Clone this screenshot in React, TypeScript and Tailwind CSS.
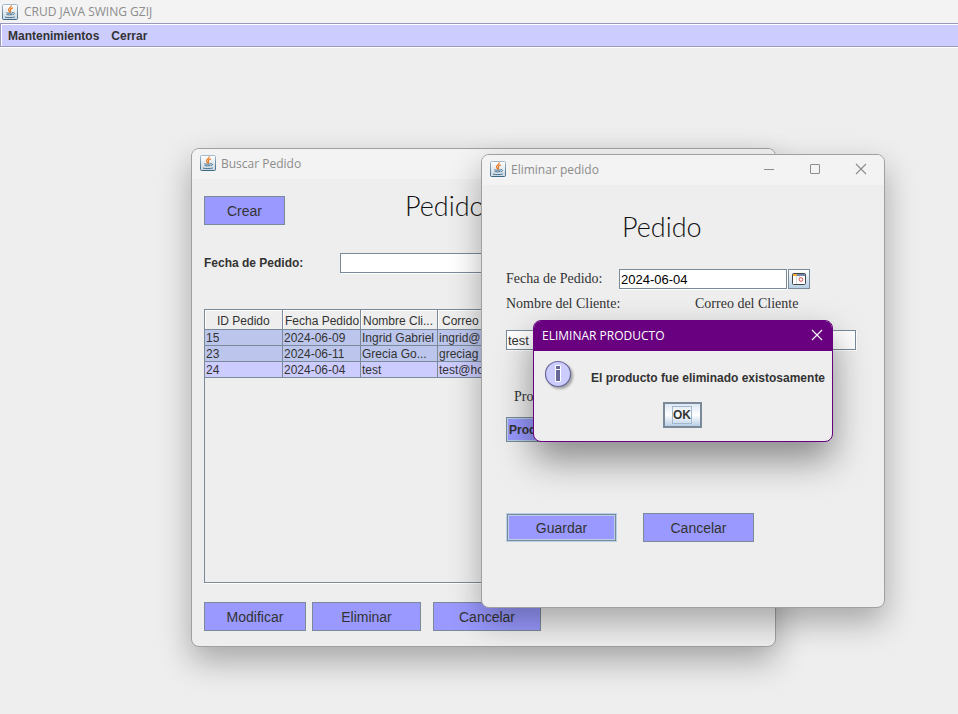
import type { ReactNode } from "react";

function JavaIcon() {
  return (
    <svg width="16" height="16" viewBox="0 0 16 16" fill="none" className="shrink-0" aria-hidden="true">
      <defs>
        <linearGradient id="cup-bg" x1="0" y1="0" x2="0" y2="1">
          <stop offset="0" stopColor="#ffffff" />
          <stop offset="1" stopColor="#c9d6e0" />
        </linearGradient>
        <linearGradient id="cup-edge" x1="0" y1="0" x2="0" y2="1">
          <stop offset="0" stopColor="#a3b9cb" />
          <stop offset="1" stopColor="#3f6885" />
        </linearGradient>
      </defs>
      <rect x="0.5" y="0.5" width="15" height="15" rx="1" fill="url(#cup-bg)" stroke="url(#cup-edge)" />
      <path d="M9.200 1.800C9.800 3.400 6.200 4.200 6.500 5.900c.2.800 1 1.200 1 2.100M10.600 4C9 4.600 8 5.400 8.400 6.300c.3.600.5 1-.1 1.800" stroke="#e8761c" strokeWidth="1.200" strokeLinecap="round" />
      <path d="M4.600 8.900c1 .5 4.600.5 5.800 0M5 10.600c1.200.4 3.800.4 5 0M11 8.700c2-.4 2.200 1.400.2 2M3.400 13.200c1.800.6 7.200.6 9-.1" stroke="#4a7391" strokeLinecap="round" />
    </svg>
  );
}

function CloseIcon() {
  return (
    <svg width="12" height="12" viewBox="0 0 12 12" stroke="currentColor" strokeWidth="1.100" fill="none" aria-hidden="true">
      <path d="M1 1l10 10M11 1L1 11" />
    </svg>
  );
}

function TitleBar({ title, children }: { title: string; children?: ReactNode }) {
  return (
    <header className="flex h-[30px] shrink-0 items-center gap-[5px] bg-[#f3f3f3] pb-0.5 pl-2 font-['Open_Sans','Noto_Sans',sans-serif] text-xs text-[#8c8c8c]">
      <JavaIcon />
      <h2 className="grow pt-0.5 whitespace-nowrap">{title}</h2>
      {children}
    </header>
  );
}

function ActionButton({ label, size, focused = false }: { label: string; size: string; focused?: boolean }) {
  const edge = focused
    ? "border-[#b8cfe5] shadow-[inset_0_0_0_1px_#7a8a99,inset_0_0_0_2px_#b8cfe5]"
    : "border-[#7a8a99]";
  return (
    <button type="button" className={`h-[29px] border bg-[#9999ff] font-['Liberation_Sans',Arial,sans-serif] text-sm text-[#333333] ${size} ${edge}`}>
      {label}
    </button>
  );
}

const columns = ["ID Pedido", "Fecha Pedido", "Nombre Cli...", "Correo"];
const orders = [
  ["15", "2024-06-09", "Ingrid Gabriel", "ingrid@"],
  ["23", "2024-06-11", "Grecia Go...", "greciag"],
  ["24", "2024-06-04", "test", "test@ho"],
];

function OrdersTable() {
  return (
    <div className="h-[274px] border border-[#7a8a99] shadow-[1px_1px_0_#ffffff]">
      <table className="w-full table-fixed border-separate border-spacing-0 text-xs text-[#333333]">
        <colgroup>
          <col className="w-[78px]" />
          <col className="w-[78px]" />
          <col className="w-[77px]" />
          <col />
        </colgroup>
        <thead>
          <tr className="h-5">
            {columns.map((name) => (
              <th
                key={name}
                className="h-5 overflow-hidden border-r border-b border-[#7a8a99] p-0 pt-0.5 pl-0.5 text-left leading-4 font-normal whitespace-nowrap shadow-[inset_1px_1px_0_#ffffff] first:pl-3 last:pl-1"
              >
                {name}
              </th>
            ))}
          </tr>
        </thead>
        <tbody>
          {orders.map((row) => (
            <tr key={row[0]} className="h-4 bg-[#bcc6ec] last:bg-[#ccccff]">
              {row.map((cell) => (
                <td key={cell} className="h-4 overflow-hidden border-r border-b border-[#7a8a99] p-0 pt-px pl-px leading-[14px] whitespace-nowrap">
                  {cell}
                </td>
              ))}
            </tr>
          ))}
        </tbody>
      </table>
    </div>
  );
}

function SearchWindow() {
  return (
    <section className="absolute top-[148px] left-[191px] w-[585px] overflow-hidden rounded-lg border border-[#a0a0a0] bg-[#eeeeee] shadow-[0_14px_32px_rgba(0,0,0,0.3)]">
      <TitleBar title="Buscar Pedido" />
      <div className="px-3 pt-[17px] pb-[15px]">
        <div className="flex h-[57px] items-start">
          <ActionButton label="Crear" size="w-[81px]" />
          <h1 className="ml-[120px] -mt-1.5 font-['Papyrus','Lato',sans-serif] text-[27px] leading-8 font-light text-[#111111]">Pedido</h1>
        </div>
        <div className="flex h-5 items-center">
          <label htmlFor="search-date" className="w-[136px] text-xs font-bold">Fecha de Pedido:</label>
          <input id="search-date" className="h-5 w-[220px] border border-[#7a8a99] bg-white px-px text-xs shadow-[1px_1px_0_#ffffff]" />
        </div>
        <div className="pt-9">
          <OrdersTable />
        </div>
        <div className="flex pt-[19px]">
          <ActionButton label="Modificar" size="w-[102px]" />
          <ActionButton label="Eliminar" size="ml-1.5 w-[109px]" />
          <ActionButton label="Cancelar" size="ml-3 w-[108px]" />
        </div>
      </div>
    </section>
  );
}

function CalendarIcon() {
  return (
    <svg width="14" height="12" viewBox="0 0 14 12" aria-hidden="true">
      <rect x="0.5" y="0.5" width="13" height="11" rx="1" fill="#ffffff" stroke="#454545" />
      <rect x="1" y="1" width="4" height="2" fill="#f0ae3e" />
      <rect x="5" y="1" width="8" height="2" fill="#7189ae" />
      <path d="M4.500 3v8M7.500 3v2" stroke="#d9d9d9" />
      <circle cx="9" cy="6.500" r="1.800" fill="#ffffff" stroke="#e34848" />
    </svg>
  );
}

function DeleteWindow() {
  return (
    <section className="absolute top-[154px] left-[481px] w-[404px] overflow-hidden rounded-lg border border-[#a0a0a0] bg-[#eeeeee] shadow-[0_14px_32px_rgba(0,0,0,0.3)]">
      <TitleBar title="Eliminar pedido">
        <div className="flex items-center gap-[34px] pr-[17px]">
          <button type="button" aria-label="Minimizar" className="flex size-3 items-center">
            <svg width="12" height="12" viewBox="0 0 12 12" stroke="currentColor" aria-hidden="true">
              <path d="M1 6.500h10" />
            </svg>
          </button>
          <button type="button" aria-label="Maximizar" className="flex size-3 items-center">
            <svg width="12" height="12" viewBox="0 0 12 12" stroke="currentColor" fill="none" aria-hidden="true">
              <rect x="1.500" y="1.500" width="9" height="9" rx="0.500" />
            </svg>
          </button>
          <button type="button" aria-label="Cerrar ventana" className="flex size-3 items-center">
            <CloseIcon />
          </button>
        </div>
      </TitleBar>
      <div className="px-6 pt-[26px] pb-[65px] font-['Liberation_Serif',serif] text-sm text-[#333333]">
        <h1 className="ml-[116px] font-['Papyrus','Lato',sans-serif] text-[27px] leading-8 font-light text-[#111111]">Pedido</h1>
        <div className="mt-[26px] flex h-5 items-center">
          <label htmlFor="order-date" className="w-[113px]">Fecha de Pedido:</label>
          <input
            id="order-date"
            defaultValue="2024-06-04"
            className="h-5 w-[168px] border border-[#7a8a99] bg-white px-px font-['Liberation_Sans',sans-serif] text-[13px] text-black shadow-[1px_1px_0_#ffffff]"
          />
          <button
            type="button"
            aria-label="Abrir calendario"
            className="ml-px flex h-5 w-[22px] items-center justify-center border border-[#7a8a99] bg-gradient-to-b from-[#ffffff] to-[#b8cfe5]"
          >
            <CalendarIcon />
          </button>
        </div>
        <div className="mt-[5px] flex h-5 items-center">
          <label htmlFor="client-name" className="w-[189px]">Nombre del Cliente:</label>
          <label htmlFor="client-mail">Correo del Cliente</label>
        </div>
        <div className="mt-4 flex gap-[29px] pr-1 font-['Liberation_Sans',sans-serif]">
          <input id="client-name" defaultValue="test" className="h-5 w-40 border border-[#7a8a99] bg-white px-px text-[13px] shadow-[1px_1px_0_#ffffff]" />
          <input id="client-mail" className="h-5 w-[161px] border border-[#7a8a99] bg-white px-px text-[13px] shadow-[1px_1px_0_#ffffff]" />
        </div>
        <p className="mt-[37px] ml-2 leading-5">Productos</p>
        <button
          type="button"
          className="mt-2.5 block h-[25px] w-[120px] border border-[#7a8a99] bg-[#9999ff] pl-[2px] text-left font-['Liberation_Sans',sans-serif] text-xs font-bold shadow-[inset_0_0_0_1px_#b8cfe5]"
        >
          Productos
        </button>
        <div className="mt-[71px] flex gap-[26px]">
          <ActionButton label="Guardar" size="w-[111px]" focused />
          <ActionButton label="Cancelar" size="w-[111px]" />
        </div>
      </div>
    </section>
  );
}

function InfoIcon() {
  return (
    <svg width="28" height="28" viewBox="0 0 28 28" className="shrink-0 drop-shadow-[2px_2px_1px_rgba(0,0,0,0.3)]" aria-hidden="true">
      <circle cx="14" cy="14" r="12.500" fill="#ccccff" stroke="#666699" strokeWidth="1.200" />
      <path d="M11.500 5.500h5v4h-5zM11.500 9.500h5v12h-5z" fill="#666699" stroke="#ffffff" />
    </svg>
  );
}

function ResultDialog() {
  return (
    <section
      role="dialog"
      aria-labelledby="dialog-title"
      className="absolute top-[320px] left-[533px] w-[300px] overflow-hidden rounded-lg border border-[#68007f] bg-[#eeeeee] shadow-[0_18px_36px_rgba(0,0,0,0.42)]"
    >
      <header className="flex h-[30px] items-center justify-between bg-[#68007f] pr-[9px] pb-0.5 pl-2 font-['Open_Sans','Noto_Sans',sans-serif] text-xs text-white">
        <h2 id="dialog-title" className="pt-0.5">ELIMINAR PRODUCTO</h2>
        <button type="button" aria-label="Cerrar mensaje">
          <CloseIcon />
        </button>
      </header>
      <div className="flex h-[51px] items-start pt-[9px] pl-2.5">
        <InfoIcon />
        <p className="mt-2.5 ml-[19px] text-xs font-bold whitespace-nowrap">El producto fue eliminado existosamente</p>
      </div>
      <div className="flex justify-center pr-0.5 pb-[13px]">
        <button
          type="button"
          className="flex h-[26px] w-[39px] items-center justify-center border-2 border-[#7a8a99] bg-gradient-to-b from-[#dde8f3] via-[#ffffff] to-[#b8cfe5] text-xs font-bold"
        >
          <span className="border border-[#a3b8cc] leading-4">OK</span>
        </button>
      </div>
    </section>
  );
}

export default function App() {
  return (
    <main className="relative flex min-h-screen flex-col overflow-hidden bg-[#eeeeee] font-['Liberation_Sans',Arial,sans-serif] text-[#333333]">
      <header className="flex h-[23px] items-center gap-1.5 bg-[#f3f3f3] pl-0.5 font-['Open_Sans','Noto_Sans',sans-serif] text-xs text-[#8c8c8c]">
        <JavaIcon />
        <span>CRUD JAVA SWING GZIJ</span>
      </header>
      <nav className="flex h-6 items-center gap-3 border border-r-0 border-[#9999bb] bg-[#ccccff] pt-0.5 pl-[7px] text-xs font-bold shadow-[inset_1px_1px_0_#ffffff,0_1px_0_#ffffff]">
        <button type="button">Mantenimientos</button>
        <button type="button">Cerrar</button>
      </nav>
      <SearchWindow />
      <DeleteWindow />
      <ResultDialog />
    </main>
  );
}
